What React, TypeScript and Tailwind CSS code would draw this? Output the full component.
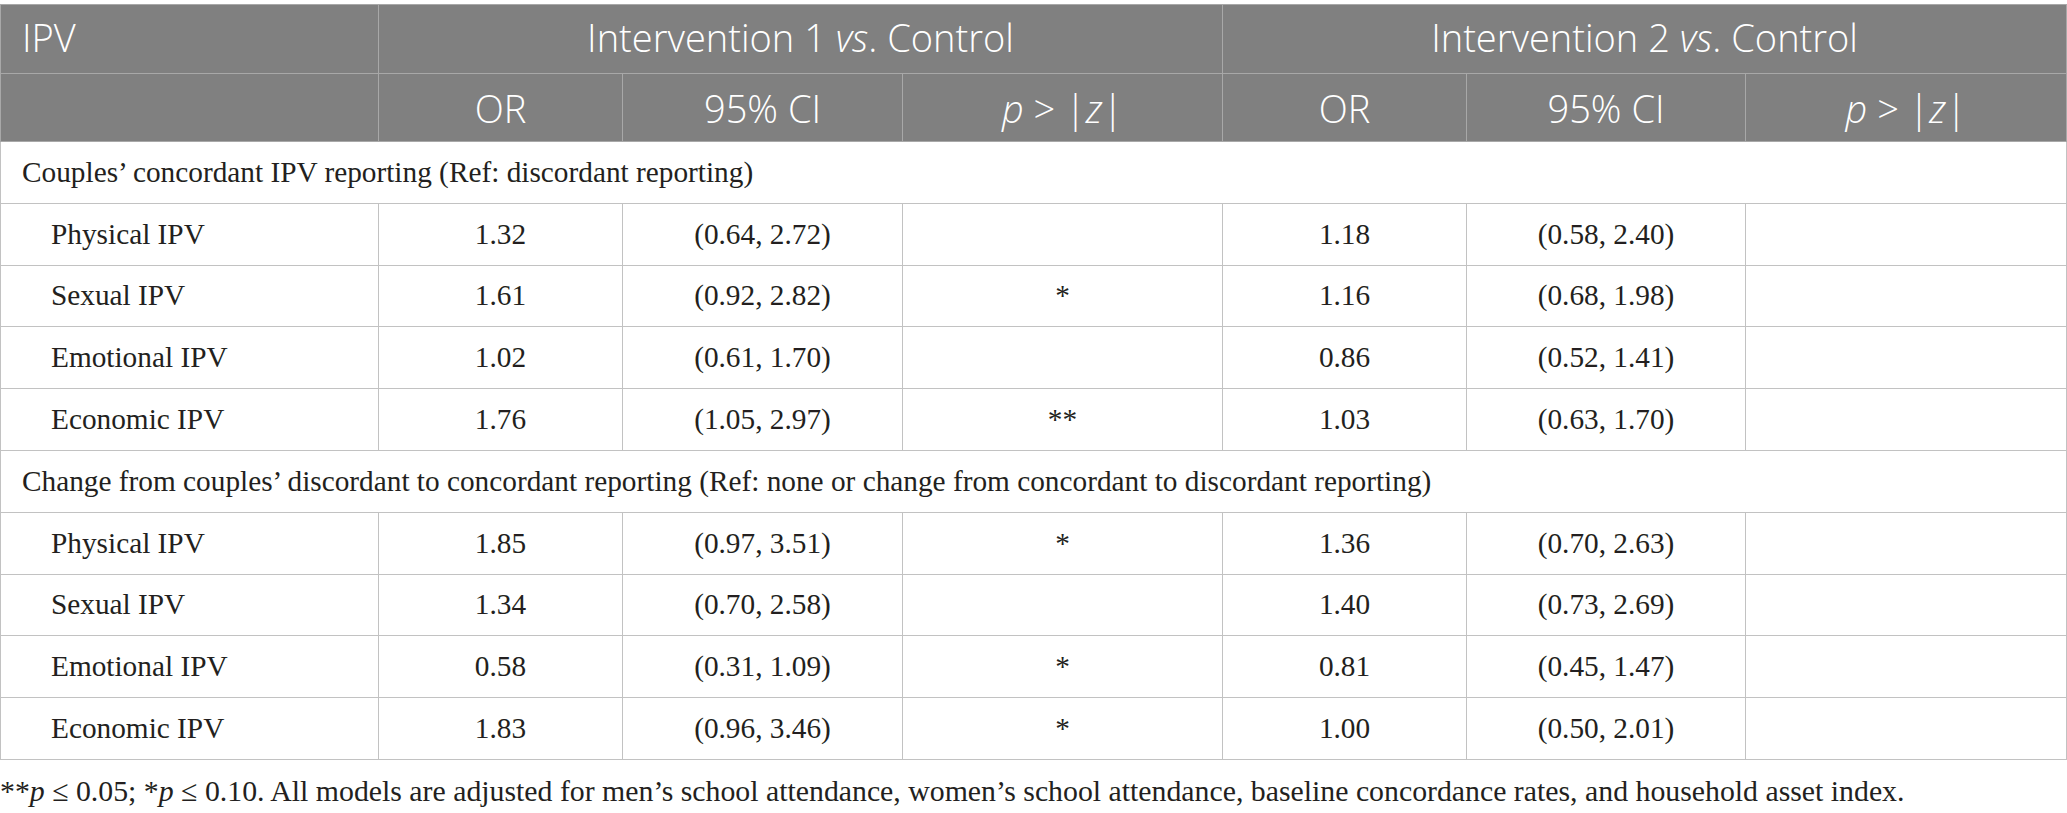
import React from "react";

type Row = {
  label: string;
  or1: string;
  ci1: string;
  p1: string;
  or2: string;
  ci2: string;
  p2: string;
};

type Section = { title: string; rows: Row[] };

const sections: Section[] = [
  {
    title: "Couples’ concordant IPV reporting (Ref: discordant reporting)",
    rows: [
      { label: "Physical IPV", or1: "1.32", ci1: "(0.64, 2.72)", p1: "", or2: "1.18", ci2: "(0.58, 2.40)", p2: "" },
      { label: "Sexual IPV", or1: "1.61", ci1: "(0.92, 2.82)", p1: "*", or2: "1.16", ci2: "(0.68, 1.98)", p2: "" },
      { label: "Emotional IPV", or1: "1.02", ci1: "(0.61, 1.70)", p1: "", or2: "0.86", ci2: "(0.52, 1.41)", p2: "" },
      { label: "Economic IPV", or1: "1.76", ci1: "(1.05, 2.97)", p1: "**", or2: "1.03", ci2: "(0.63, 1.70)", p2: "" },
    ],
  },
  {
    title:
      "Change from couples’ discordant to concordant reporting (Ref: none or change from concordant to discordant reporting)",
    rows: [
      { label: "Physical IPV", or1: "1.85", ci1: "(0.97, 3.51)", p1: "*", or2: "1.36", ci2: "(0.70, 2.63)", p2: "" },
      { label: "Sexual IPV", or1: "1.34", ci1: "(0.70, 2.58)", p1: "", or2: "1.40", ci2: "(0.73, 2.69)", p2: "" },
      { label: "Emotional IPV", or1: "0.58", ci1: "(0.31, 1.09)", p1: "*", or2: "0.81", ci2: "(0.45, 1.47)", p2: "" },
      { label: "Economic IPV", or1: "1.83", ci1: "(0.96, 3.46)", p1: "*", or2: "1.00", ci2: "(0.50, 2.01)", p2: "" },
    ],
  },
];

const head = "border border-[#a8a8a8] font-light text-white text-[38px] leading-none";
const cell = "border border-[#c2c2c2] text-center align-middle";

function PZ() {
  return (
    <>
      <i>p</i> &gt; |<i>z</i>|
    </>
  );
}

export default function App() {
  return (
    <div className="w-[2067px] h-[813px] bg-white pt-[4px] overflow-hidden">
      <table className="table-fixed border-collapse w-[2066px] font-['Liberation_Serif',serif] text-[29.3px] leading-none text-[#231f20]">
        <colgroup>
          <col className="w-[378px]" />
          <col className="w-[244px]" />
          <col className="w-[280px]" />
          <col className="w-[320px]" />
          <col className="w-[244px]" />
          <col className="w-[279px]" />
          <col className="w-[321px]" />
        </colgroup>
        <thead className="bg-[#808080] font-['Open_Sans',sans-serif]">
          <tr className="h-[69px]">
            <th className={`${head} text-left pl-[21px] pb-[5px]`}>IPV</th>
            <th colSpan={3} className={`${head} text-center pb-[5px]`}>
              Intervention 1 <i>vs</i>. Control
            </th>
            <th colSpan={3} className={`${head} text-center pb-[5px]`}>
              Intervention 2 <i>vs</i>. Control
            </th>
          </tr>
          <tr className="h-[68px]">
            <th className={head}></th>
            <th className={`${head} text-center`}>OR</th>
            <th className={`${head} text-center`}>95% CI</th>
            <th className={`${head} text-center`}>
              <PZ />
            </th>
            <th className={`${head} text-center`}>OR</th>
            <th className={`${head} text-center`}>95% CI</th>
            <th className={`${head} text-center`}>
              <PZ />
            </th>
          </tr>
        </thead>
        <tbody>
          {sections.map((s) => (
            <React.Fragment key={s.title}>
              <tr className="h-[61.8px]">
                <td colSpan={7} className="border border-[#c2c2c2] pl-[21px] text-left align-middle">
                  {s.title}
                </td>
              </tr>
              {s.rows.map((r) => (
                <tr key={s.title + r.label} className="h-[61.8px]">
                  <td className="border border-[#c2c2c2] pl-[50px] text-left align-middle">{r.label}</td>
                  <td className={cell}>{r.or1}</td>
                  <td className={cell}>{r.ci1}</td>
                  <td className={cell}>{r.p1}</td>
                  <td className={cell}>{r.or2}</td>
                  <td className={cell}>{r.ci2}</td>
                  <td className={cell}>{r.p2}</td>
                </tr>
              ))}
            </React.Fragment>
          ))}
        </tbody>
      </table>
      <p className="pt-[14px] font-['Liberation_Serif',serif] text-[29.8px] leading-[34px] whitespace-nowrap text-[#231f20]">
        **<i>p</i> ≤ 0.05; *<i>p</i> ≤ 0.10. All models are adjusted for men’s school attendance, women’s school
        attendance, baseline concordance rates, and household asset index.
      </p>
    </div>
  );
}
